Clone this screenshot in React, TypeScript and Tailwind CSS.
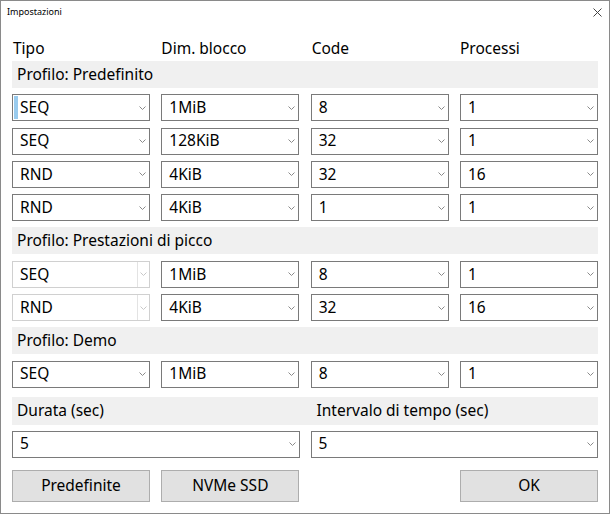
import React from "react";

const font = { fontFamily: '"Noto Sans", "Open Sans", sans-serif' };

function Chevron({ light }: { light?: boolean }) {
  return (
    <svg width="7" height="4" viewBox="0 0 7 4" className="shrink-0">
      <polyline points="0.5,0.5 3.5,3.5 6.5,0.5" fill="none" stroke={light ? "#c8c8c8" : "#8a8a8a"} strokeWidth="1" />
    </svg>
  );
}

function Combo({ value, disabled, focus }: { value: string; disabled?: boolean; focus?: boolean }) {
  return (
    <div
      className={
        "flex h-[27px] items-center bg-white border " +
        (disabled ? "border-[#d0d0d0]" : "border-[#7a7a7a]")
      }
    >
      {focus ? (
        <>
          <div className="ml-[1px] w-[4px] self-stretch my-[1px] bg-[#99cbee]" />
          <span className="ml-[2px] flex-1 text-[15.5px] leading-none text-black">{value}</span>
        </>
      ) : (
        <span className="ml-[7px] flex-1 text-[15.5px] leading-none text-black">{value}</span>
      )}
      {disabled ? (
        <div className="flex self-stretch items-center">
          <div className="w-px self-stretch bg-[#e3e3e3]" />
          <div className="w-[11px] flex justify-center">
            <Chevron light />
          </div>
        </div>
      ) : (
        <div className="mr-[3px]">
          <Chevron />
        </div>
      )}
    </div>
  );
}

function Band({ text }: { text: string }) {
  return (
    <div className="h-[27px] bg-[#f0f0f0] flex items-center pl-[5px] text-[15.5px] text-black">{text}</div>
  );
}

type Row = [string, string, string, string, boolean?];

export default function App() {
  const prof1: Row[] = [
    ["SEQ", "1MiB", "8", "1"],
    ["SEQ", "128KiB", "32", "1"],
    ["RND", "4KiB", "32", "16"],
    ["RND", "4KiB", "1", "1"],
  ];
  const prof2: Row[] = [
    ["SEQ", "1MiB", "8", "1", true],
    ["RND", "4KiB", "32", "16", true],
  ];
  const prof3: Row[] = [["SEQ", "1MiB", "8", "1"]];

  const renderRow = (r: Row, i: number, focusFirst = false) => (
    <div key={i} className="grid grid-cols-4 gap-x-[11.33px]">
      <Combo value={r[0]} disabled={r[4]} focus={focusFirst && i === 0} />
      <Combo value={r[1]} />
      <Combo value={r[2]} />
      <Combo value={r[3]} />
    </div>
  );

  return (
    <div style={font} className="w-[610px] h-[514px] bg-white border border-[#8a8a8a] flex flex-col overflow-hidden">
      <div className="h-[22px] flex items-center justify-between pl-[6px] pr-[7px] shrink-0">
        <span className="text-[9px] text-black">Impostazioni</span>
        <svg width="9" height="9" viewBox="0 0 9 9">
          <path d="M0.5 0.5 L8.5 8.5 M8.5 0.5 L0.5 8.5" stroke="#444" strokeWidth="1" />
        </svg>
      </div>
      <div className="px-[11px] flex flex-col">
        <div className="grid grid-cols-4 gap-x-[11.33px] mt-[14px] h-[22px] items-center text-[15.5px] text-black">
          <span className="pl-[1px]">Tipo</span>
          <span>Dim. blocco</span>
          <span className="pl-[1px]">Code</span>
          <span>Processi</span>
        </div>
        <div className="mt-[2px] flex flex-col gap-[6.3px]">
          <Band text="Profilo: Predefinito" />
          {prof1.map((r, i) => renderRow(r, i, true))}
          <Band text="Profilo: Prestazioni di picco" />
          {prof2.map((r, i) => renderRow(r, i))}
          <Band text="Profilo: Demo" />
          {prof3.map((r, i) => renderRow(r, i))}
        </div>
        <div className="mt-[9px] h-[28px] bg-[#f0f0f0] grid grid-cols-2 gap-x-[11px] items-center text-[15.5px] text-black">
          <span className="pl-[5px]">Durata (sec)</span>
          <span className="pl-[6px]">Intervalo di tempo (sec)</span>
        </div>
        <div className="mt-[6px] grid grid-cols-2 gap-x-[11px]">
          <Combo value="5" />
          <Combo value="5" />
        </div>
        <div className="mt-[12px] grid grid-cols-4 gap-x-[11.33px]">
          <button className="h-[32px] bg-[#e1e1e1] border border-[#adadad] text-[15.5px] text-black">Predefinite</button>
          <button className="h-[32px] bg-[#e1e1e1] border border-[#adadad] text-[15.5px] text-black">NVMe SSD</button>
          <div />
          <button className="h-[32px] bg-[#e1e1e1] border border-[#adadad] text-[15.5px] text-black">OK</button>
        </div>
      </div>
    </div>
  );
}
